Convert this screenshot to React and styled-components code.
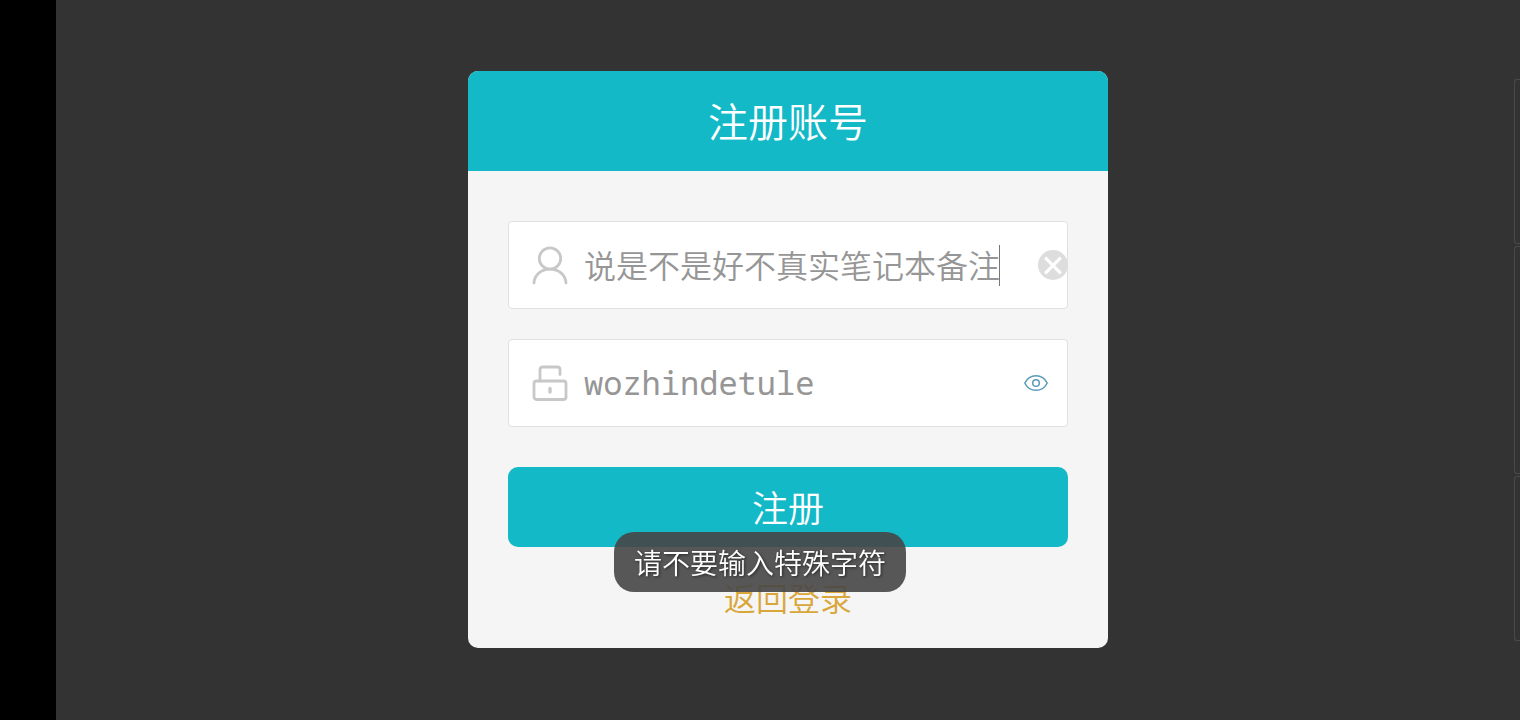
import React, { useState } from "react";
import styled, { createGlobalStyle } from "styled-components";

const GlobalStyle = createGlobalStyle`
  * { box-sizing: border-box; }
  body {
    margin: 0;
    background: #333333;
    font-family: "Noto Sans CJK SC", sans-serif;
    font-weight: 350;
  }
  button, input { font: inherit; margin: 0; padding: 0; border: 0; }
`;

const Screen = styled.div`
  display: flex;
  min-height: 100vh;
  background: #333333;
`;

const Gutter = styled.div`
  flex: 0 0 56px;
  background: #000000;
`;

const Stage = styled.main`
  position: relative;
  flex: 1;
  display: flex;
  align-items: center;
  justify-content: center;
  padding-bottom: 1px;
  overflow: hidden;
`;

const SidePanels = styled.div`
  position: absolute;
  top: 0;
  right: 0;
  bottom: 0;
  width: 6px;
  display: flex;
  flex-direction: column;
  justify-content: center;
  gap: 2px;
`;

const SidePanel = styled.div`
  height: ${(p) => (p.$tall ? 228 : 165)}px;
  border: 1px solid #4a4a4a;
  border-right: 0;
  border-radius: 3px 0 0 3px;
`;

const Card = styled.form`
  width: 640px;
  max-width: 100%;
  border-radius: 10px;
  overflow: hidden;
  background: #f5f5f5;
`;

const Title = styled.h1`
  margin: 0;
  padding: 19px 20px 21px;
  background: #14b9c8;
  color: #ffffff;
  font-size: 40px;
  font-weight: 350;
  line-height: 60px;
  text-align: center;
`;

const Body = styled.div`
  display: flex;
  flex-direction: column;
  padding: 50px 40px 31px;
`;

const Fields = styled.div`
  display: flex;
  flex-direction: column;
  gap: 30px;
  margin-bottom: 40px;
`;

const Field = styled.div`
  display: flex;
  align-items: center;
  height: 88px;
  padding-left: 23px;
  padding-right: ${(p) => p.$end}px;
  border: 1px solid #e0e0e0;
  border-radius: 4px;
  background: #ffffff;
`;

const FieldLabel = styled.label`
  display: flex;
  margin-right: 16px;
`;

const Entry = styled.div`
  flex: 1;
  min-width: 0;
  display: flex;
  align-items: center;
`;

const TextInput = styled.input`
  min-width: 0;
  height: 48px;
  padding-bottom: 2px;
  background: transparent;
  color: #969696;
  font-size: 32px;
  font-weight: ${(p) => (p.$mono ? 400 : 350)};
  outline: 0;
  field-sizing: ${(p) => (p.$fit ? "content" : "fixed")};
  flex: ${(p) => (p.$fit ? "0 1 auto" : "1")};
  font-family: ${(p) => (p.$mono ? '"Noto Sans Mono", "Liberation Mono", monospace' : "inherit")};
`;

const Caret = styled.span`
  flex: none;
  width: 1px;
  height: 41px;
  margin-left: -1px;
  background: #777777;
`;

const IconButton = styled.button`
  display: flex;
  margin-right: ${(p) => (p.$flush ? -1 : 0)}px;
  background: none;
  cursor: pointer;
`;

const Submit = styled.button`
  height: 80px;
  padding-bottom: 2px;
  border-radius: 10px;
  background: #14b9c8;
  color: #ffffff;
  font-size: 36px;
  cursor: pointer;
`;

const BackLink = styled.a`
  align-self: center;
  margin-top: 30px;
  color: #d9a63a;
  font-size: 32px;
  line-height: 40px;
  text-decoration: none;
`;

const ToastLayer = styled.div`
  position: fixed;
  left: 0;
  right: 0;
  bottom: 128px;
  display: flex;
  justify-content: center;
  pointer-events: none;
`;

const Toast = styled.div`
  padding: 10px 20px;
  border-radius: 20px;
  background: rgba(70, 70, 70, 0.9);
  color: #ffffff;
  font-size: 28px;
  line-height: 40px;
  text-shadow: 1px 1px 3px rgba(0, 0, 0, 0.6);
`;

function UserIcon() {
  return (
    <svg width="36" height="40" viewBox="0 0 36 40" fill="none" stroke="#c8c8c8" strokeWidth="2.8" strokeLinecap="round" aria-hidden="true">
      <circle cx="18" cy="13.5" r="10.7" />
      <path d="M2 38C2.4 30 9 24.2 18 24.2S33.6 30 34 38" />
    </svg>
  );
}

function LockIcon() {
  return (
    <svg width="36" height="36" viewBox="0 0 36 36" fill="none" stroke="#c8c8c8" strokeWidth="2.8" strokeLinecap="round" aria-hidden="true">
      <rect x="2" y="16" width="32" height="18.5" rx="2.5" />
      <path d="M8 16V4.5Q8 2 10.5 2H25.5Q28 2 28 4.5V9.5" />
      <path d="M18 23.5V27" strokeWidth="3.4" />
    </svg>
  );
}

function ClearIcon() {
  return (
    <svg width="30" height="30" viewBox="0 0 30 30" aria-hidden="true">
      <circle cx="15" cy="15" r="15" fill="#dddddd" />
      <path d="M7.2 7.7L22.8 23.3M22.8 7.7L7.2 23.3" stroke="#ffffff" strokeWidth="3.2" />
    </svg>
  );
}

function EyeIcon() {
  return (
    <svg width="24" height="24" viewBox="0 0 24 24" fill="none" stroke="#5a9bb8" strokeWidth="1.5" strokeLinejoin="round" aria-hidden="true">
      <path d="M.8 12C3 7.4 7.2 4.7 12 4.7S21 7.4 23.2 12C21 16.6 16.8 19.3 12 19.3S3 16.6 .8 12Z" />
      <circle cx="12" cy="12" r="3.3" />
    </svg>
  );
}

export default function App() {
  const [name, setName] = useState("说是不是好不真实笔记本备注");
  const [password, setPassword] = useState("wozhindetule");
  const [visible, setVisible] = useState(true);

  return (
    <Screen>
      <GlobalStyle />
      <Gutter />
      <Stage>
        <SidePanels>
          <SidePanel />
          <SidePanel $tall />
          <SidePanel />
        </SidePanels>
        <Card onSubmit={(e) => e.preventDefault()}>
          <Title>注册账号</Title>
          <Body>
            <Fields>
              <Field $end={0}>
                <FieldLabel htmlFor="account" aria-label="账号">
                  <UserIcon />
                </FieldLabel>
                <Entry>
                  <TextInput id="account" $fit value={name} onChange={(e) => setName(e.target.value)} />
                  <Caret />
                </Entry>
                <IconButton type="button" $flush aria-label="清除" onClick={() => setName("")}>
                  <ClearIcon />
                </IconButton>
              </Field>
              <Field $end={19}>
                <FieldLabel htmlFor="password" aria-label="密码">
                  <LockIcon />
                </FieldLabel>
                <Entry>
                  <TextInput
                    id="password"
                    $mono
                    type={visible ? "text" : "password"}
                    value={password}
                    onChange={(e) => setPassword(e.target.value)}
                  />
                </Entry>
                <IconButton type="button" aria-label="显示密码" onClick={() => setVisible(!visible)}>
                  <EyeIcon />
                </IconButton>
              </Field>
            </Fields>
            <Submit type="submit">注册</Submit>
            <BackLink href="#login">返回登录</BackLink>
          </Body>
        </Card>
      </Stage>
      <ToastLayer>
        <Toast role="status">请不要输入特殊字符</Toast>
      </ToastLayer>
    </Screen>
  );
}
